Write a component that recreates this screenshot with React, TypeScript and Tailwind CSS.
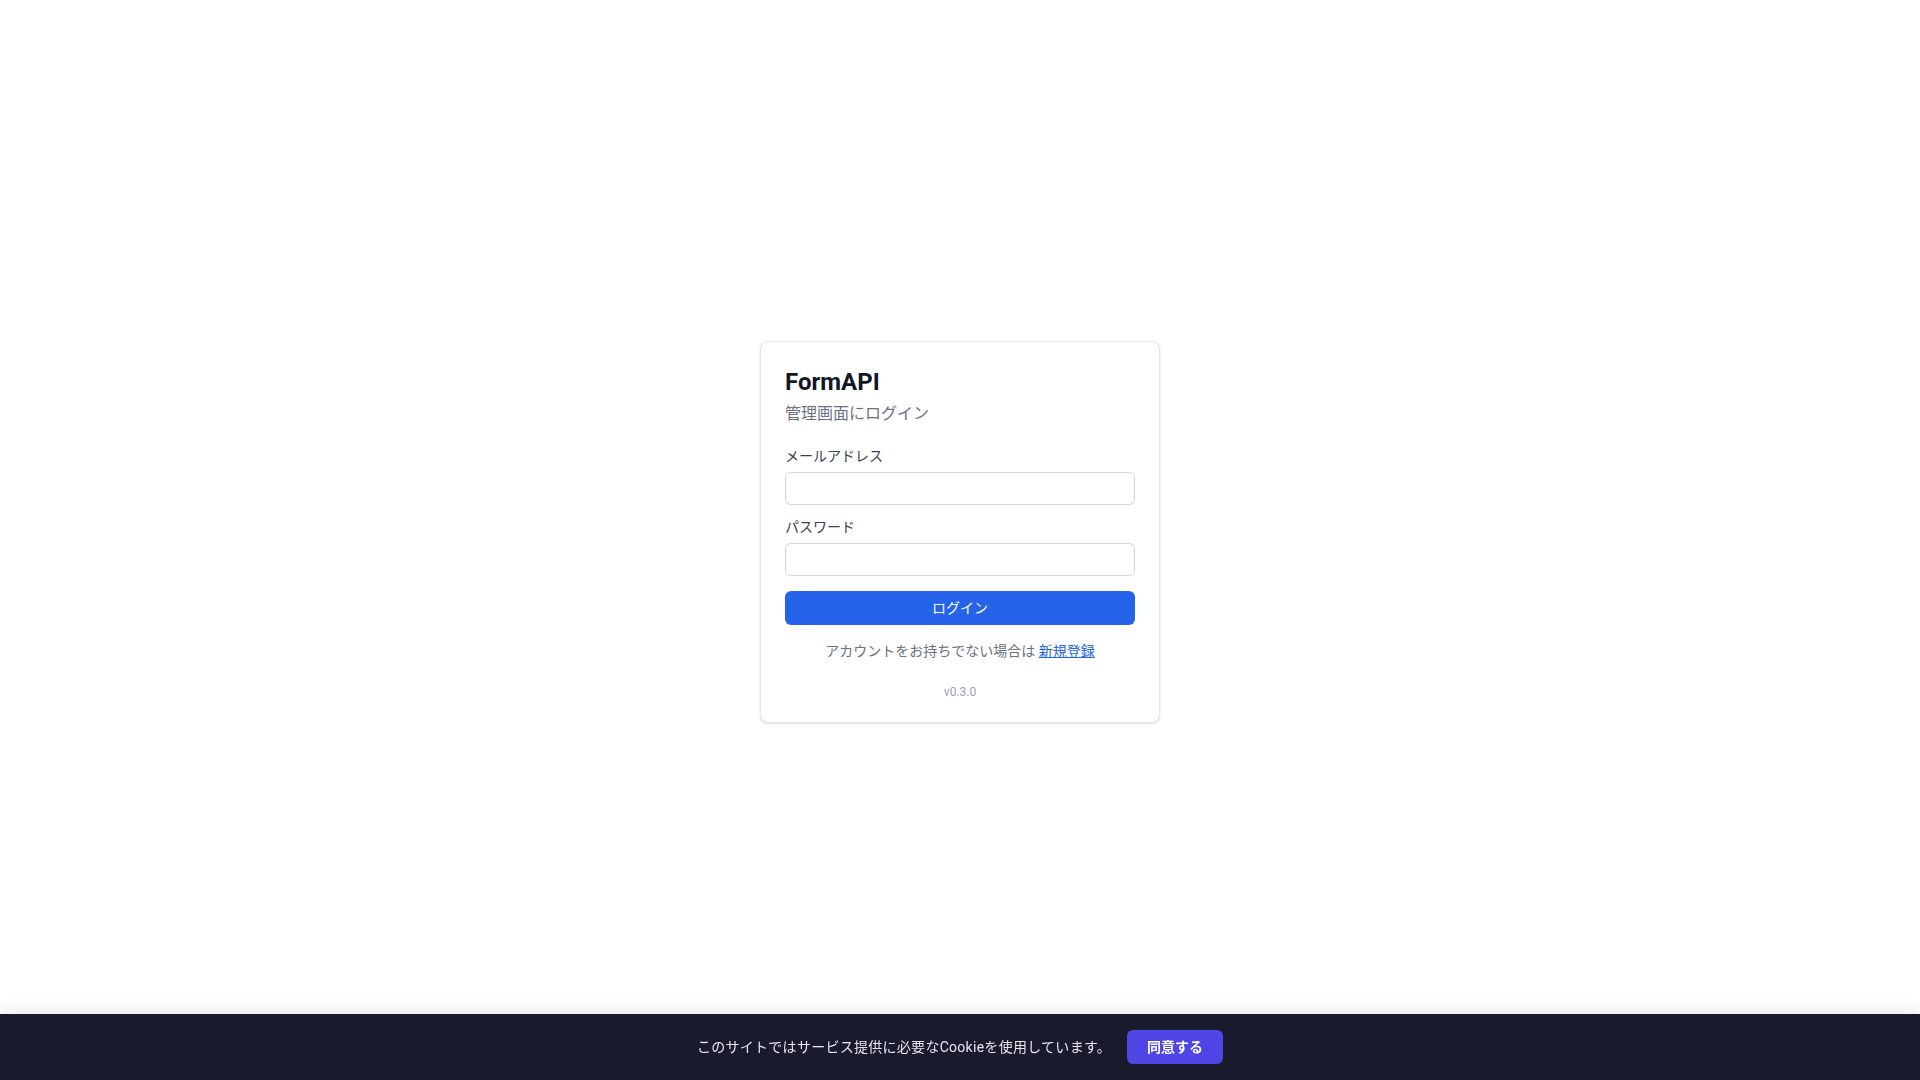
import React, { useState } from "react";

const font = {
  fontFamily: 'Roboto, "Noto Sans CJK JP", sans-serif',
};

export default function App() {
  const [email, setEmail] = useState("");
  const [password, setPassword] = useState("");
  const [agreed, setAgreed] = useState(false);

  const fields = [
    { label: "メールアドレス", value: email, setter: setEmail, type: "email" },
    { label: "パスワード", value: password, setter: setPassword, type: "password" },
  ];

  return (
    <div style={font} className="min-h-screen bg-white">
      <div className="flex h-screen items-center justify-center pb-4">
        <div className="w-[400px] rounded-lg border border-gray-200 bg-white px-6 pt-6 pb-[22px] shadow-sm">
          <h1 className="text-2xl font-bold leading-8 text-gray-900">FormAPI</h1>
          <p className="mt-1 text-base text-gray-500">管理画面にログイン</p>

          <form className="mt-5" onSubmit={(e) => e.preventDefault()}>
            <div className="space-y-3">
              {fields.map(({ label, value, setter, type }) => (
                <div key={label}>
                  <label className="mb-1.5 block text-sm font-normal text-gray-700">{label}</label>
                  <input
                    type={type}
                    value={value}
                    onChange={(e) => setter(e.target.value)}
                    className="block h-[33px] w-full rounded-md border border-gray-300 px-3 text-sm focus:outline-none"
                  />
                </div>
              ))}
            </div>
            <button
              type="submit"
              className="mt-[15px] block h-[34px] w-full rounded-md bg-[#2563eb] text-sm text-white"
            >
              ログイン
            </button>
          </form>

          <p className="mt-4 text-center text-sm text-gray-500">
            アカウントをお持ちでない場合は{" "}
            <a href="#" className="text-[#2563eb] underline">
              新規登録
            </a>
          </p>
          <p className="mt-[23px] text-center text-xs text-gray-400">v0.3.0</p>
        </div>
      </div>

      {!agreed && (
        <div className="fixed inset-x-0 bottom-0 flex items-center justify-center gap-4 bg-[#1a1a2e] py-4 shadow-[0_-4px_14px_rgba(0,0,0,0.08)]">
          <span className="text-sm tracking-[0.02em] text-gray-200">
            このサイトではサービス提供に必要なCookieを使用しています。
          </span>
          <button
            onClick={() => setAgreed(true)}
            className="h-[34px] rounded-md bg-[#4f46e5] px-5 text-sm font-bold text-white"
          >
            同意する
          </button>
        </div>
      )}
    </div>
  );
}
